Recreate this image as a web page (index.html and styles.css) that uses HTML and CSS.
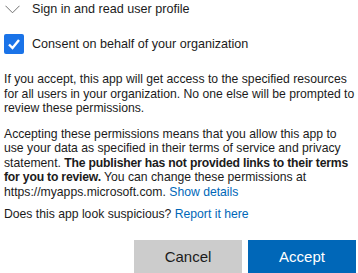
FILE: index.html
```html
<!DOCTYPE html>
<html>
<head>
<meta charset="utf-8">
<link rel="stylesheet" href="styles.css">
</head>
<body>
<div class="page">
  <div class="perm">
    <svg class="chev" width="16" height="9" viewBox="0 0 16 9"><path d="M0.5 0.5 L8 8 L15.5 0.5" fill="none" stroke="#666" stroke-width="1"/></svg>
    <span>Sign in and read user profile</span>
  </div>
  <div class="consent">
    <span class="box"><svg width="20" height="20" viewBox="0 0 20 20"><path d="M5 10.5 L8.5 14 L15 6" fill="none" stroke="#fff" stroke-width="2.4"/></svg></span>
    <span>Consent on behalf of your organization</span>
  </div>
  <p class="p1">If you accept, this app will get access to the specified resources for all users in your organization. No one else will be prompted to review these permissions.</p>
  <p class="p2">Accepting these permissions means that you allow this app to use your data as specified in their terms of service and privacy statement. <b>The publisher has not provided links to their terms for you to review.</b> You can change these permissions at https://myapps.microsoft.com. <a class="link">Show details</a></p>
  <p class="p3">Does this app look suspicious? <a class="link">Report it here</a></p>
  <div class="actions">
    <button class="btn cancel">Cancel</button>
    <button class="btn accept">Accept</button>
  </div>
</div>
</body>
</html>
```
FILE: styles.css
```css
html, body { margin: 0; padding: 0; background: #fff; }
body { font-family: "Liberation Sans", Arial, sans-serif; color: #1b1b1b; }
.page { padding: 0 0 0 4px; width: 354px; }
.perm { display: flex; align-items: center; height: 20px; font-size: 12.6px; margin-top: -1px; }
.chev { margin: 0 12px 0 1px; width: 15px; }
.consent { display: flex; align-items: center; font-size: 12.6px; margin-top: 14px; height: 21px; }
.box { width: 20px; height: 20px; background: #1a73e8; border-radius: 2px; margin-right: 8px; display: flex; }
.box svg { display: block; }
p { font-size: 12.2px; line-height: 14.5px; margin: 0; }
p b { letter-spacing: -0.2px; }
.p1 { margin-top: 18px; }
.p2 { margin-top: 11px; }
.p3 { margin-top: 8px; }
.link { color: #0067b8; }
.actions { display: flex; justify-content: flex-end; gap: 6px; margin-top: 18px; margin-right: 2px; }
.btn { width: 108px; height: 34px; border: 0; font-family: "Liberation Sans", Arial, sans-serif; font-size: 15px; padding: 0; }
.cancel { background: #cccccc; color: #1b1b1b; }
.accept { background: #0067b8; color: #fff; }
```
